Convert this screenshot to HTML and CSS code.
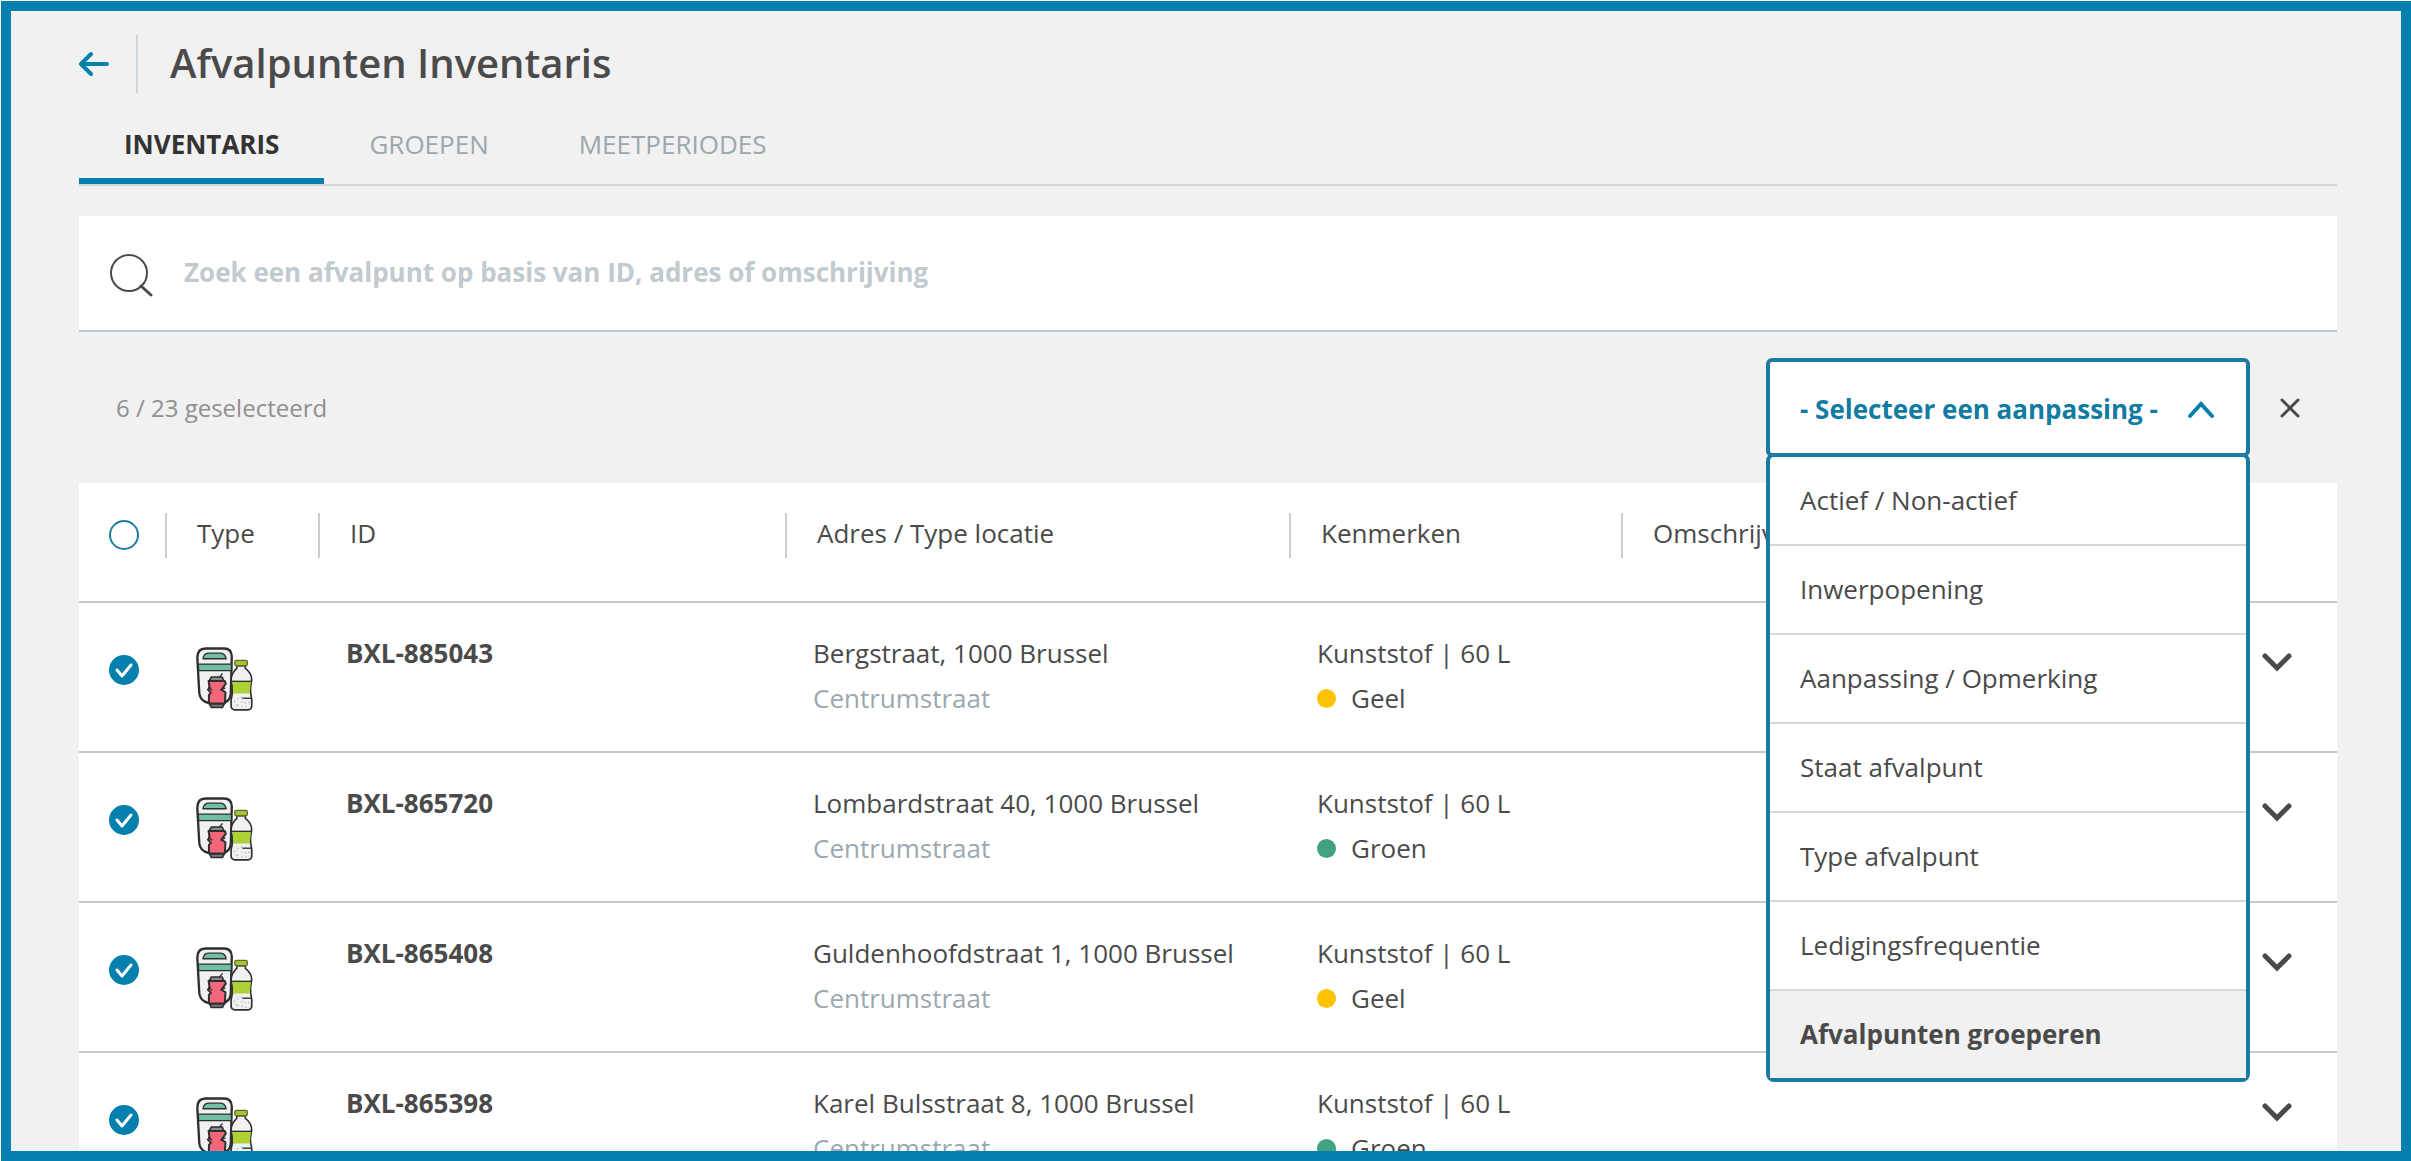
FILE: index.html
```html
<!DOCTYPE html>
<html lang="nl">
<head>
<meta charset="utf-8">
<meta name="viewport" content="width=device-width, initial-scale=1">
<title>Afvalpunten Inventaris</title>
<link rel="stylesheet" href="styles.css">
</head>
<body>
<svg class="sprite" aria-hidden="true">
  <symbol id="pmd" viewBox="44 40 178 198">
    <path d="M76 50H132Q154 50 155 74L152 186Q150 210 128 214H84Q60 208 57 186L51 78Q51 50 76 50Z" fill="#f1f1f2" stroke="#2f2f33" stroke-width="7"/>
    <path d="M54 97H154V117H55Z" fill="#6fbfa4" stroke="#2f2f33" stroke-width="4"/>
    <path d="M68 81Q70 65 84 64H122Q135 65 138 81Z" fill="#6fbfa4" stroke="#2f2f33" stroke-width="4" stroke-linejoin="round"/>
    <path d="M118 136L127 125" fill="none" stroke="#2f2f33" stroke-width="4"/>
    <path d="M93 136H126L131 148H87Z" fill="#8b8b8e" stroke="#2f2f33" stroke-width="5" stroke-linejoin="round"/>
    <path d="M85 148H134L137 156L124 174L136 182L134 216H86V190L92 184L83 174L88 168Z" fill="#f4677b" stroke="#2f2f33" stroke-width="6" stroke-linejoin="round"/>
    <path d="M120 176L136 169M84 166L96 176" fill="none" stroke="#2f2f33" stroke-width="4"/>
    <path d="M88 217H132L127 228H93Z" fill="#77777a" stroke="#2f2f33" stroke-width="5" stroke-linejoin="round"/>
    <path d="M170 102H196V110Q215 124 215 144L213 158Q210 170 212 184Q217 204 215 226Q213 234 204 235H164Q155 234 153 226Q151 204 157 184Q158 170 155 158L153 144Q154 124 170 110Z" fill="#f1f1f2" stroke="#2f2f33" stroke-width="5"/>
    <path d="M158 149H213L209 186H159Z" fill="#aed136"/>
    <path d="M155 149H214" stroke="#2f2f33" stroke-width="4"/>
    <path d="M162 210h3m7-8h3m-3 20h3m8-25h3m-2 14h3m-2 14h3m7-26h3m-2 28h3m6-14h3m-41 7h3m24-6h3" stroke="#a4a4a8" stroke-width="4"/>
    <path d="M187 200H214" stroke="#2f2f33" stroke-width="4"/>
    <rect x="164" y="86" width="38" height="16" rx="5" fill="#a3c62f" stroke="#5d6b2c" stroke-width="4"/>
  </symbol>
  <symbol id="down" viewBox="0 0 30 22"><path d="M3 4L15 16L27 4" fill="none" stroke="#4a4a4a" stroke-width="5" stroke-linecap="round"/></symbol>
</svg>

<main class="frame">
  <header class="head">
    <a class="back" href="#" aria-label="Terug">
      <svg width="31" height="26" viewBox="0 0 31 26"><path d="M28 13H2M12 3L2 13L12 23" fill="none" stroke="#0480ae" stroke-width="4" stroke-linecap="round" stroke-linejoin="round"/></svg>
    </a>
    <h1 class="title">Afvalpunten Inventaris</h1>
  </header>

  <nav class="tabs">
    <a class="tab tab-active" href="#">INVENTARIS</a>
    <a class="tab" href="#">GROEPEN</a>
    <a class="tab" href="#">MEETPERIODES</a>
  </nav>

  <label class="search">
    <svg width="44" height="44" viewBox="0 0 44 44" aria-hidden="true"><circle cx="20" cy="20" r="18" fill="none" stroke="#4a4a4a" stroke-width="2"/><path d="M32 33L42 42" stroke="#4a4a4a" stroke-width="3" stroke-linecap="round"/></svg>
    <input class="search-input" type="search" aria-label="Zoeken" placeholder="Zoek een afvalpunt op basis van ID, adres of omschrijving">
  </label>

  <div class="bar">
    <p class="count">6 / 23 geselecteerd</p>
    <div class="picker">
      <button class="picker-button" type="button" aria-haspopup="true" aria-expanded="true">
        <span>- Selecteer een aanpassing -</span>
        <svg width="28" height="20" viewBox="0 0 28 20" aria-hidden="true"><path d="M3 16L14 4L25 16" fill="none" stroke="#0480ae" stroke-width="4" stroke-linecap="round"/></svg>
      </button>
      <ul class="menu">
        <li><button class="item" type="button">Actief / Non-actief</button></li>
        <li><button class="item" type="button">Inwerpopening</button></li>
        <li><button class="item" type="button">Aanpassing / Opmerking</button></li>
        <li><button class="item" type="button">Staat afvalpunt</button></li>
        <li><button class="item" type="button">Type afvalpunt</button></li>
        <li><button class="item" type="button">Ledigingsfrequentie</button></li>
        <li><button class="item item-active" type="button">Afvalpunten groeperen</button></li>
      </ul>
    </div>
    <button class="close" type="button" aria-label="Sluiten">
      <svg width="20" height="20" viewBox="0 0 20 20"><path d="M2 2L18 18M18 2L2 18" stroke="#4a4a4a" stroke-width="3" stroke-linecap="round"/></svg>
    </button>
  </div>

  <table class="list">
    <colgroup><col class="c-check"><col class="c-type"><col class="c-id"><col class="c-address"><col class="c-features"><col><col class="c-open"></colgroup>
    <thead>
      <tr>
        <th class="check"><input class="tick" type="checkbox" aria-label="Alles selecteren"></th>
        <th><div class="label">Type</div></th>
        <th><div class="label">ID</div></th>
        <th><div class="label">Adres / Type locatie</div></th>
        <th><div class="label">Kenmerken</div></th>
        <th><div class="label">Omschrijving</div></th>
        <th></th>
      </tr>
    </thead>
    <tbody>
      <tr>
        <td class="check"><input class="tick" type="checkbox" checked aria-label="BXL-885043"></td>
        <td class="type"><svg class="pmd" role="img" aria-label="PMD"><use href="#pmd"/></svg></td>
        <td class="id">BXL-885043</td>
        <td>Bergstraat, 1000 Brussel<div class="muted">Centrumstraat</div></td>
        <td>Kunststof | 60 L<div class="colour"><span class="dot yellow"></span>Geel</div></td>
        <td></td>
        <td class="open"><button class="expand" type="button" aria-label="Openen"><svg width="30" height="22"><use href="#down"/></svg></button></td>
      </tr>
      <tr>
        <td class="check"><input class="tick" type="checkbox" checked aria-label="BXL-865720"></td>
        <td class="type"><svg class="pmd" role="img" aria-label="PMD"><use href="#pmd"/></svg></td>
        <td class="id">BXL-865720</td>
        <td>Lombardstraat 40, 1000 Brussel<div class="muted">Centrumstraat</div></td>
        <td>Kunststof | 60 L<div class="colour"><span class="dot green"></span>Groen</div></td>
        <td></td>
        <td class="open"><button class="expand" type="button" aria-label="Openen"><svg width="30" height="22"><use href="#down"/></svg></button></td>
      </tr>
      <tr>
        <td class="check"><input class="tick" type="checkbox" checked aria-label="BXL-865408"></td>
        <td class="type"><svg class="pmd" role="img" aria-label="PMD"><use href="#pmd"/></svg></td>
        <td class="id">BXL-865408</td>
        <td>Guldenhoofdstraat 1, 1000 Brussel<div class="muted">Centrumstraat</div></td>
        <td>Kunststof | 60 L<div class="colour"><span class="dot yellow"></span>Geel</div></td>
        <td></td>
        <td class="open"><button class="expand" type="button" aria-label="Openen"><svg width="30" height="22"><use href="#down"/></svg></button></td>
      </tr>
      <tr>
        <td class="check"><input class="tick" type="checkbox" checked aria-label="BXL-865398"></td>
        <td class="type"><svg class="pmd" role="img" aria-label="PMD"><use href="#pmd"/></svg></td>
        <td class="id">BXL-865398</td>
        <td>Karel Bulsstraat 8, 1000 Brussel<div class="muted">Centrumstraat</div></td>
        <td>Kunststof | 60 L<div class="colour"><span class="dot green"></span>Groen</div></td>
        <td></td>
        <td class="open"><button class="expand" type="button" aria-label="Openen"><svg width="30" height="22"><use href="#down"/></svg></button></td>
      </tr>
    </tbody>
  </table>
</main>
</body>
</html>
```
FILE: styles.css
```css
* { box-sizing: border-box; }

body {
  margin: 0;
  padding: 1px 0 0 1px;
  height: 100vh;
  background: #fff;
  color: #4a4a4a;
  font-family: "Open Sans", "Noto Sans", sans-serif;
  font-size: 26px;
  line-height: 45px;
}

button, input {
  font: inherit;
  color: inherit;
}

button {
  display: block;
  margin: 0;
  padding: 0;
  border: 0;
  background: none;
}

a { text-decoration: none; }

svg { display: block; flex: none; }

.sprite {
  position: absolute;
  width: 0;
  height: 0;
}

.frame {
  height: 100%;
  overflow: hidden;
  padding: 24px 64px 0 68px;
  border: 10px solid #0480b0;
  background: #f1f1f1;
}

.head {
  display: flex;
  align-items: center;
}

.back {
  padding: 16px 26px 16px 0;
  border-right: 2px solid #cdd4da;
}

.title {
  margin: 0 0 0 32px;
  font-size: 40px;
  line-height: 56px;
  padding-bottom: 2px;
  font-weight: 600;
}

.tabs {
  display: flex;
  margin-top: 20px;
  border-bottom: 2px solid #d3d6d8;
}

.tab {
  padding: 9px 45px 11px;
  border-bottom: 6px solid transparent;
  color: #9aa7af;
}

.tab-active {
  border-bottom-color: #0480ae;
  color: #333;
  font-weight: 700;
}

.search {
  display: flex;
  align-items: center;
  gap: 31px;
  height: 116px;
  margin-top: 30px;
  padding: 4px 30px 0;
  border-bottom: 2px solid #bac7cd;
  background: #fff;
}

.search-input {
  flex: 1;
  min-width: 0;
  height: 60px;
  padding: 0 0 6px;
  border: 0;
  outline: 0;
  background: none;
  font-weight: 700;
}

.search-input::placeholder {
  color: #c0cacf;
  opacity: 1;
}

.bar {
  display: flex;
  align-items: center;
  height: 151px;
  padding: 0 37px;
}

.count {
  flex: 1;
  margin: 0;
  color: #8f8f8f;
  font-size: 24px;
}

.picker {
  position: relative;
  width: 484px;
  margin-right: 30px;
}

.picker-button {
  display: flex;
  align-items: center;
  justify-content: space-between;
  width: 100%;
  height: 99px;
  padding: 4px 31px 0 30px;
  border: 4px solid #1b7ba2;
  border-radius: 6px;
  background: #fff;
  color: #127ba3;
  font-weight: 700;
}

.menu {
  position: absolute;
  top: 95px;
  left: 0;
  z-index: 1;
  width: 100%;
  margin: 0;
  padding: 0;
  border: 4px solid #1b7ba2;
  border-radius: 8px;
  background: #fff;
  list-style: none;
}

.menu li + li { border-top: 2px solid #d6d9db; }

.item {
  width: 100%;
  height: 87px;
  padding: 0 30px;
  text-align: left;
}

.item-active {
  background: #f1f1f1;
  font-weight: 700;
}

.list {
  width: 100%;
  border-collapse: collapse;
  table-layout: fixed;
  background: #fff;
}

.c-check { width: 86px; }
.c-type { width: 153px; }
.c-id { width: 467px; }
.c-address { width: 504px; }
.c-features { width: 332px; }
.c-open { width: 86px; }

.list tr { border-bottom: 2px solid #c5cacf; }

.list th {
  padding: 30px 0 43px;
  font-weight: 400;
  text-align: left;
}

.label {
  padding: 0 0 4px 30px;
  border-left: 2px solid #c8cdd2;
  line-height: 41px;
}

.list td {
  height: 150px;
  padding: 28px 0 0 28px;
  vertical-align: top;
}

.list th.check { padding: 28px 0 43px 30px; }
.list td.check { padding: 52px 0 0 30px; }
.list td.type { padding: 42px 0 0 30px; }
.list td.open { padding: 49px 0 0 11px; }

.list td.id { font-weight: 700; }

.muted { color: #9ba8b0; }

.tick {
  display: block;
  width: 30px;
  height: 30px;
  margin: 0;
  border: 2px solid #1d7fa8;
  border-radius: 50%;
  appearance: none;
}

.tick:checked {
  border-color: #0480ae;
  background: #0480ae url("data:image/svg+xml,%3Csvg xmlns='http://www.w3.org/2000/svg' viewBox='0 0 26 26'%3E%3Cpath d='M6 13l5 6L20 8' fill='none' stroke='white' stroke-width='3' stroke-linecap='round' stroke-linejoin='round'/%3E%3C/svg%3E") center / 26px no-repeat;
}

.pmd {
  width: 59px;
  height: 66px;
}

.colour {
  display: flex;
  align-items: center;
  gap: 15px;
}

.dot {
  width: 19px;
  height: 19px;
  border-radius: 50%;
}

.yellow { background: #fdc204; }
.green { background: #42a183; }
```
